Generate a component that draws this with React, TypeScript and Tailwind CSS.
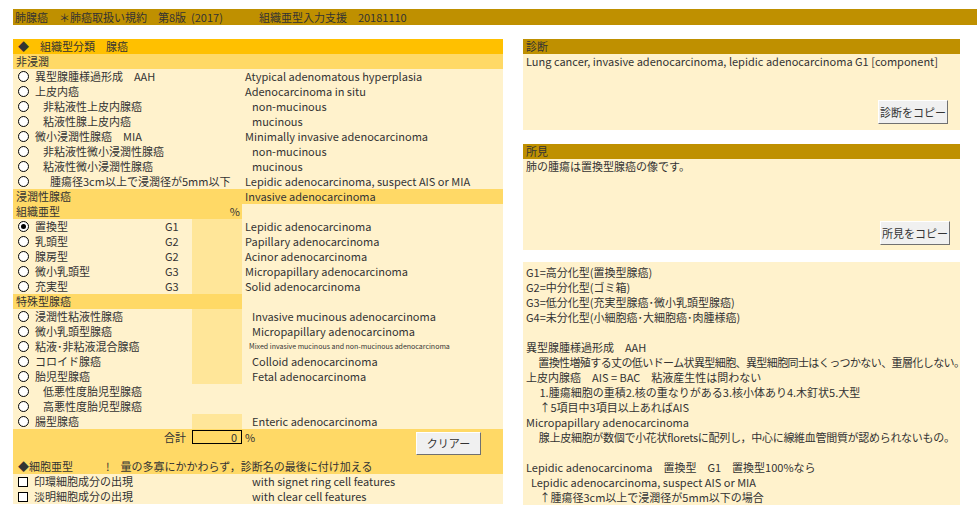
import React from "react";

type R = { t: string; kind?: "radio" | "check" | "none"; ind?: number; g?: string; pct?: boolean; en?: string; enInd?: number; small?: boolean; sel?: boolean };

const Radio = ({ sel }: { sel?: boolean }) => (
  <span className="inline-flex w-[11px] h-[11px] rounded-full border-[1.5px] border-black bg-white items-center justify-center shrink-0">
    {sel && <span className="w-[5px] h-[5px] rounded-full bg-black" />}
  </span>
);
const Check = () => <span className="inline-block w-[10px] h-[10px] border border-black bg-white shrink-0" />;

const Row = ({ r }: { r: R }) => (
  <div className="flex h-[15px] bg-[#fff2cc] items-center">
    <div className="w-[179px] flex items-center pl-[5px]">
      {r.kind === "check" ? <Check /> : r.kind === "none" ? <span className="w-[11px]" /> : <Radio sel={r.sel} />}
      <span className="whitespace-nowrap" style={{ marginLeft: 6 + (r.ind || 0) }}>{r.t}</span>
    </div>
    <div className={"w-[50px] h-full " + (r.pct ? "bg-[#ffe699]" : "")} />
    <div className={"whitespace-nowrap " + (r.small ? "text-[7px]" : "")} style={{ paddingLeft: 3 + (r.enInd || 0) }}>{r.en}</div>
  </div>
);

const GRow = ({ r }: { r: R }) => (
  <div className="flex h-[15px] bg-[#fff2cc] items-center">
    <div className="w-[152px] flex items-center pl-[5px]">
      <Radio sel={r.sel} />
      <span className="ml-[6px] whitespace-nowrap">{r.t}</span>
    </div>
    <div className="w-[27px]">{r.g}</div>
    <div className="w-[50px] h-full bg-[#ffe699]" />
    <div className="pl-[3px] whitespace-nowrap">{r.en}</div>
  </div>
);

export default function App() {
  const non: R[] = [
    { t: "異型腺腫様過形成\u3000AAH", en: "Atypical adenomatous hyperplasia" },
    { t: "上皮内癌", en: "Adenocarcinoma in situ" },
    { t: "非粘液性上皮内腺癌", ind: 8, en: "non-mucinous", enInd: 7 },
    { t: "粘液性腺上皮内癌", ind: 8, en: "mucinous", enInd: 7 },
    { t: "微小浸潤性腺癌\u3000MIA", en: "Minimally invasive adenocarcinoma" },
    { t: "非粘液性微小浸潤性腺癌", ind: 8, en: "non-mucinous", enInd: 7 },
    { t: "粘液性微小浸潤性腺癌", ind: 8, en: "mucinous", enInd: 7 },
    { t: "腫瘍径3cm以上で浸潤径が5mm以下", ind: 15, en: "Lepidic adenocarcinoma, suspect AIS or MIA" },
  ];
  const sub: R[] = [
    { t: "置換型", g: "G1", en: "Lepidic adenocarcinoma", sel: true },
    { t: "乳頭型", g: "G2", en: "Papillary adenocarcinoma" },
    { t: "腺房型", g: "G2", en: "Acinor adenocarcinoma" },
    { t: "微小乳頭型", g: "G3", en: "Micropapillary adenocarcinoma" },
    { t: "充実型", g: "G3", en: "Solid adenocarcinoma" },
  ];
  const sp: R[] = [
    { t: "浸潤性粘液性腺癌", pct: true, en: "Invasive mucinous adenocarcinoma", enInd: 7 },
    { t: "微小乳頭型腺癌", pct: true, en: "Micropapillary adenocarcinoma", enInd: 7 },
    { t: "粘液･非粘液混合腺癌", pct: true, en: "Mixed invasive mucinous and non-mucinous adenocarcinoma", enInd: 4, small: true },
    { t: "コロイド腺癌", pct: true, en: "Colloid adenocarcinoma", enInd: 7 },
    { t: "胎児型腺癌", pct: true, en: "Fetal adenocarcinoma", enInd: 7 },
    { t: "低悪性度胎児型腺癌", ind: 8 },
    { t: "高悪性度胎児型腺癌", ind: 8 },
    { t: "腸型腺癌", pct: true, en: "Enteric adenocarcinoma", enInd: 7 },
  ];
  const btn = "bg-[#f0f0f0] border border-t-white border-l-white border-b-[#707070] border-r-[#707070] flex items-center justify-center text-[11px]";
  return (
    <div className="w-[977px] h-[516px] bg-white text-[11px] leading-[15px] text-[#333] pt-[9px] overflow-hidden" style={{ fontFamily: '"Noto Sans CJK JP", Tahoma, "Liberation Sans", sans-serif' }}>
      <div className="ml-[13px] h-[16px] bg-[#bf9000] flex items-center pl-[2px] whitespace-pre">
        <span>肺腺癌　＊肺癌取扱い規約　第8版  (2017)</span>
        <span className="ml-[36px]">組織亜型入力支援　20181110</span>
      </div>
      <div className="flex mt-[14px] ml-[13px]">
        <div className="w-[490px]">
          <div className="h-[15px] bg-[#ffc000] flex items-center pl-[5px]">◆　組織型分類　腺癌</div>
          <div className="h-[15px] bg-[#ffd966] pl-[3px]">非浸潤</div>
          {non.map((r, i) => <Row key={i} r={r} />)}
          <div className="h-[15px] bg-[#ffd966] flex"><div className="w-[232px] pl-[3px]">浸潤性腺癌</div><div>Invasive adenocarcinoma</div></div>
          <div className="h-[15px] bg-[#fff2cc] flex"><div className="w-[229px] bg-[#ffd966] pl-[3px] flex justify-between pr-[2px]"><span>組織亜型</span><span>%</span></div></div>
          {sub.map((r, i) => <GRow key={i} r={r} />)}
          <div className="h-[15px] bg-[#fff2cc] flex"><div className="w-[229px] bg-[#ffd966] pl-[3px]">特殊型腺癌</div></div>
          {sp.map((r, i) => <Row key={i} r={r} />)}
          <div className="h-[30px] bg-[#ffd966] flex">
            <div className="w-[179px] text-right pr-[6px] pt-[1px]">合計</div>
            <div className="w-[50px] h-[14px] mt-[1px] border border-black text-right pr-[4px] leading-[12px]">0</div>
            <div className="pl-[3px] pt-[1px] w-[90px]">%</div>
            <div className={btn + " w-[65px] h-[23px] mt-[3px] ml-[84px]"}>クリアー</div>
          </div>
          <div className="h-[15px] bg-[#ffd966] pl-[5px] whitespace-pre">◆細胞亜型　　　!　量の多寡にかかわらず，診断名の最後に付け加える</div>
          <Row r={{ t: "印環細胞成分の出現", kind: "check", en: "with signet ring cell features", enInd: 7 }} />
          <Row r={{ t: "淡明細胞成分の出現", kind: "check", en: "with clear cell features", enInd: 7 }} />
        </div>
        <div className="ml-[20px] w-[437px]">
          <div className="h-[15px] bg-[#bf9000] pl-[3px]">診断</div>
          <div className="h-[76px] bg-[#fff2cc] px-[3px] flex flex-col">
            <div>Lung cancer, invasive adenocarcinoma, lepidic adenocarcinoma G1 [component]</div>
            <div className="flex justify-end mt-[31px] pr-[9px]"><div className={btn + " w-[70px] h-[24px]"}>診断をコピー</div></div>
          </div>
          <div className="h-[15px] bg-[#bf9000] pl-[3px] mt-[14px]">所見</div>
          <div className="h-[91px] bg-[#fff2cc] px-[3px] flex flex-col">
            <div>肺の腫瘍は置換型腺癌の像です。</div>
            <div className="flex justify-end mt-[47px] pr-[7px]"><div className={btn + " w-[70px] h-[24px]"}>所見をコピー</div></div>
          </div>
          <div className="mt-[12px] h-[243px] bg-[#fff2cc] px-[3px] pt-[3px] whitespace-pre overflow-hidden">
            <div>G1=高分化型(置換型腺癌)</div>
            <div>G2=中分化型(ゴミ箱)</div>
            <div>G3=低分化型(充実型腺癌･微小乳頭型腺癌)</div>
            <div>G4=未分化型(小細胞癌･大細胞癌･肉腫様癌)</div>
            <div>&nbsp;</div>
            <div>異型腺腫様過形成　AAH</div>
            <div className="tracking-[-0.6px]">　 置換性増殖する丈の低いドーム状異型細胞、異型細胞同士はくっつかない、重層化しない。</div>
            <div>上皮内腺癌　AIS = BAC　粘液産生性は問わない</div>
            <div>　 1.腫瘍細胞の重積2.核の重なりがある3.核小体あり4.木釘状5.大型</div>
            <div>　 ↑5項目中3項目以上あればAIS</div>
            <div>Micropapillary adenocarcinoma</div>
            <div className="tracking-[-0.3px]">　 腺上皮細胞が数個で小花状floretsに配列し，中心に線維血管間質が認められないもの。</div>
            <div>&nbsp;</div>
            <div>Lepidic adenocarcinoma　置換型　G1　置換型100%なら</div>
            <div>  Lepidic adenocarcinoma, suspect AIS or MIA</div>
            <div>　 ↑腫瘍径3cm以上で浸潤径が5mm以下の場合</div>
          </div>
        </div>
      </div>
    </div>
  );
}
